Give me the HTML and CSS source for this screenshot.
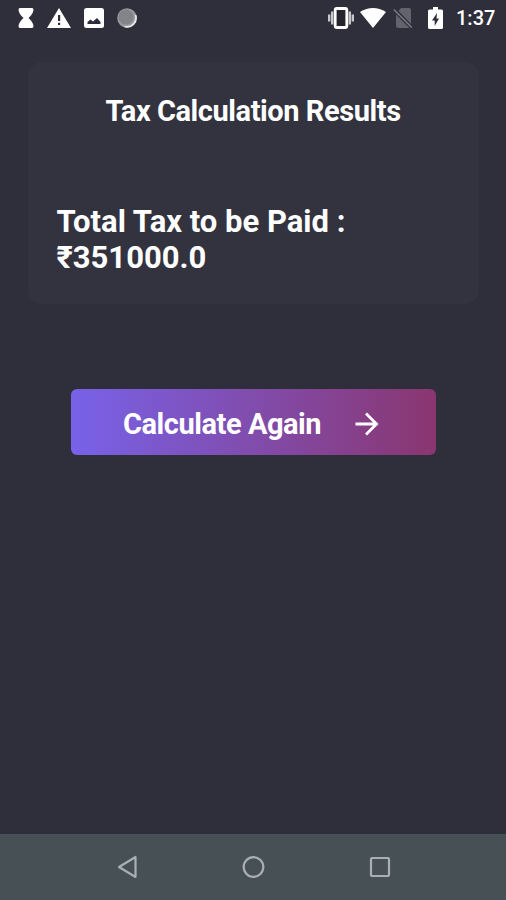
FILE: index.html
```html
<!DOCTYPE html>
<html lang="en">
<head>
    <meta charset="UTF-8">
    <meta name="viewport" content="width=device-width, initial-scale=1.0">
    <title>Tax Calculation Results</title>
    <link rel="stylesheet" href="styles.css">
</head>
<body>
    <!-- Status bar -->
    <header class="status-bar">
        <div class="status-left">
            <svg width="16" height="20" viewBox="0 0 16 20" fill="#fff"><path d="M2 0h12q1.500 0 1.500 2-.5 4-5 8 4.500 4 5 8 0 2-1.500 2H2Q.5 20 .5 18q.5-4 5-8-4.500-4-5-8Q.5 0 2 0z"/></svg>
            <svg width="24" height="20" viewBox="0 0 24 20"><path fill="#fff" d="M12 0L24 20H0z"/><path fill="#2f2d3b" d="M11 7h2.2v6H11zM11 14.8h2.2V17H11z"/></svg>
            <svg width="20" height="20" viewBox="0 0 20 20"><rect width="20" height="20" rx="2.5" fill="#fff"/><path fill="#2f2d3b" d="M3.500 16v-2l3-2.500 2.500 2 4-3.500 3.500 4v2z"/></svg>
            <svg width="20" height="20" viewBox="0 0 20 20"><circle cx="10" cy="10" r="9.8" fill="#99989e"/><path fill="none" stroke="#e8e8ea" stroke-width="1.8" d="M18.5 7a9 9 0 0 1-11 11.5"/><circle cx="9" cy="9" r="7.5" fill="#85838a"/></svg>
        </div>
        <div class="status-right">
            <svg class="vibrate" width="26" height="22" viewBox="0 0 26 22"><path fill="none" stroke="#c8c8cc" stroke-width="2.400" d="M1.200 7.500v7M4.200 4.500v13M21.800 4.500v13M24.800 7.500v7"/><rect x="7.200" y="1.500" width="11.600" height="19" rx="1.5" fill="#25242c" stroke="#fff" stroke-width="2.8"/></svg>
            <svg class="wifi" width="26" height="20" viewBox="0 0 26 20"><path fill="#fff" d="M13 20L0 4Q13-4 26 4z"/></svg>
            <svg class="sim" width="20" height="20" viewBox="0 0 20 20"><path fill="#64626c" d="M8 0h8q2 0 2 2v14L5.500 3zM3 6.500L16.500 20H5q-2 0-2-2z"/><path fill="none" stroke="#7a7882" stroke-width="1.6" d="M.8 1.5L18.8 19.5"/></svg>
            <svg class="battery" width="15" height="22" viewBox="0 0 15 22"><path fill="#fff" d="M5 0h5v2.5h3.5q1.5 0 1.5 1.5v16.500q0 1.500-1.500 1.500h-12Q0 22 0 20.500V4q0-1.500 1.500-1.500H5z"/><path fill="#2f2d3b" d="M9 6L4 13.500h2.700V19l4.300-7.500H8.500z"/></svg>
            <span class="clock">1:37</span>
        </div>
    </header>

    <main class="content">
        <!-- Results card -->
        <section class="card">
            <h1 class="card-title">Tax Calculation Results</h1>
            <p class="total">Total Tax to be Paid :<br>₹351000.0</p>
        </section>

        <button type="button" class="calculate-button">
            <span>Calculate Again</span>
            <svg width="24" height="24" viewBox="0 0 24 24" fill="none" stroke="#fff" stroke-width="2.800"><path d="M.5 12h22M11 1.500L21.500 12 11 22.500"/></svg>
        </button>
    </main>

    <!-- Navigation bar -->
    <nav class="nav-bar">
        <svg width="22" height="24" viewBox="0 0 22 24"><path d="M19.500 2v20L3 12z"/></svg>
        <svg width="24" height="24" viewBox="0 0 24 24"><circle cx="12.500" cy="12" r="9.800"/></svg>
        <svg width="24" height="24" viewBox="0 0 24 24"><rect x="3" y="3" width="18" height="18" rx="1"/></svg>
    </nav>
</body>
</html>
```
FILE: styles.css
```css
* {
    box-sizing: border-box;
}
body {
    display: flex;
    flex-direction: column;
    height: 100vh;
    margin: 0;
    background-color: #2f2e3b;
    color: white;
    font-family: Roboto, sans-serif;
}
svg {
    display: block;
    flex-shrink: 0;
}
.status-bar {
    display: flex;
    justify-content: space-between;
    height: 35px;
    padding: 0 12px 0 18px;
}
.status-left, .status-right {
    display: flex;
    align-items: center;
}
.status-left {
    gap: 13px;
}
.wifi {
    margin-left: 6px;
}
.sim {
    margin-left: 7px;
}
.battery {
    margin-left: 15px;
}
.clock {
    width: 38px;
    margin-left: 13px;
    font-size: 20px;
    font-weight: 500;
    white-space: nowrap;
}
.content {
    display: flex;
    flex-direction: column;
    flex: 1;
    align-items: center;
    padding-top: 27px;
}
.card {
    width: 451px;
    height: 242px;
    padding: 32px 29px;
    border-radius: 14px;
    background-color: #33333f;
}
.card-title {
    margin: 0;
    font-size: 29px;
    font-weight: 700;
    letter-spacing: -0.43px;
    line-height: 34px;
    text-align: center;
    white-space: nowrap;
}
.total {
    margin: 76px 0 0;
    font-size: 31px;
    font-weight: 700;
    line-height: 36px;
    white-space: nowrap;
}
.calculate-button {
    display: flex;
    align-items: center;
    justify-content: space-between;
    width: 365px;
    height: 66px;
    margin: 85px 0 0 1px;
    padding: 3px 57px 0 52px;
    border: none;
    border-radius: 6px;
    background: linear-gradient(to right, #7862e9, #8a366f);
    color: white;
    font-family: inherit;
    font-size: 29px;
    font-weight: 700;
    letter-spacing: -0.45px;
    white-space: nowrap;
}
.nav-bar {
    display: flex;
    align-items: center;
    justify-content: space-between;
    height: 66px;
    padding: 0 114px 0 116px;
    background-color: #465055;
}
.nav-bar svg {
    fill: none;
    stroke: #a9b0b3;
    stroke-width: 2.2;
    stroke-linejoin: round;
}
```
